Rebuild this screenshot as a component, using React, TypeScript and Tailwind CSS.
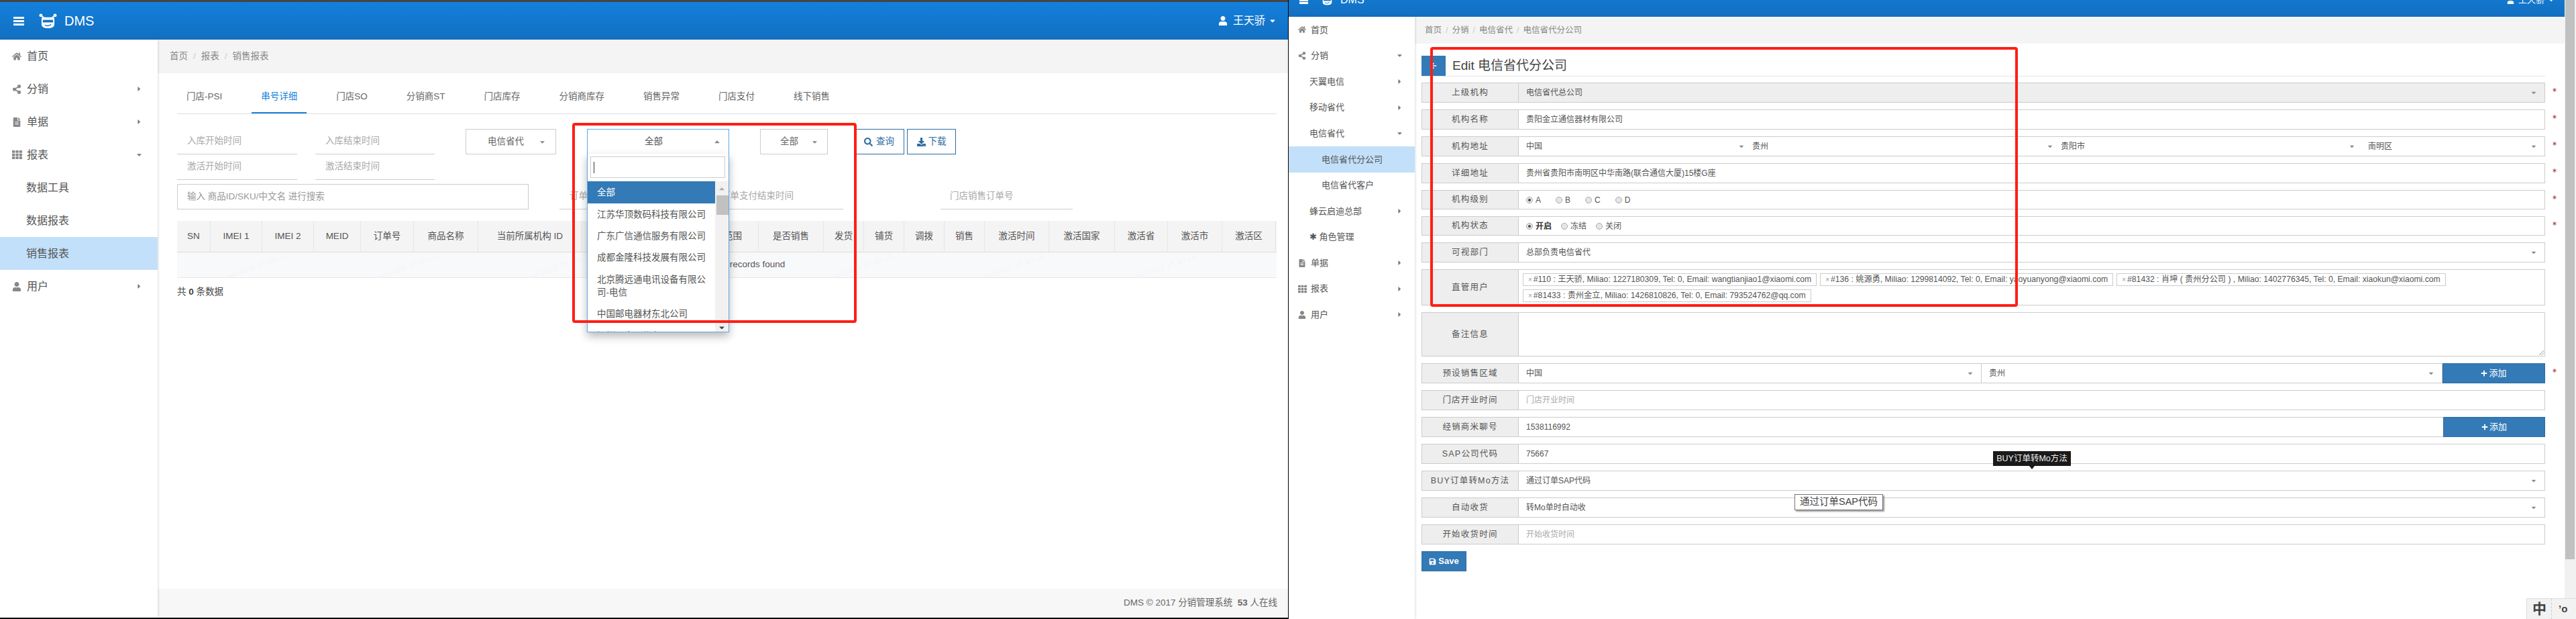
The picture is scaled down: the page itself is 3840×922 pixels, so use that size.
import type { ReactNode } from "react";
import {
  FaArrowLeft,
  FaAsterisk,
  FaCaretDown,
  FaCaretRight,
  FaCaretUp,
  FaDownload,
  FaFileAlt,
  FaHome,
  FaPlus,
  FaSave,
  FaSearch,
  FaShareAlt,
  FaTh,
  FaUser,
} from "react-icons/fa";

const tabs = ["门店-PSI", "串号详细", "门店SO", "分销商ST", "门店库存", "分销商库存", "销售异常", "门店支付", "线下销售"];

const columns = [
  "SN", "IMEI 1", "IMEI 2", "MEID", "订单号", "商品名称", "当前所属机构 ID", "当前所属机构名称", "销售范围",
  "是否销售", "发货", "铺货", "调拨", "销售", "激活时间", "激活国家", "激活省", "激活市", "激活区",
];

const options = [
  "江苏华顶数码科技有限公司",
  "广东广信通信服务有限公司",
  "成都金隆科技发展有限公司",
  "北京腾远通电讯设备有限公司-电信",
  "中国邮电器材东北公司",
  "深圳天音通信有限公司",
];

const tags = [
  "#110 : 王天骄, Miliao: 1227180309, Tel: 0, Email: wangtianjiao1@xiaomi.com",
  "#136 : 姚源勇, Miliao: 1299814092, Tel: 0, Email: yaoyuanyong@xiaomi.com",
  "#81432 : 肖坤 ( 贵州分公司 ) , Miliao: 1402776345, Tel: 0, Email: xiaokun@xiaomi.com",
  "#81433 : 贵州金立, Miliao: 1426810826, Tel: 0, Email: 793524762@qq.com",
];

function Logo({ className }: { className: string }) {
  return (
    <svg viewBox="0 0 28 24" className={className} fill="#fff">
      <circle cx="3" cy="3" r="2.6" />
      <circle cx="25" cy="3" r="2.6" />
      <path d="M3 3 L8 7 M25 3 L20 7" stroke="#fff" strokeWidth="2" />
      <path d="M6 6 H22 Q24 6 24 9 V17 Q24 23 14 23 Q4 23 4 17 V9 Q4 6 6 6 Z" />
      <path d="M6 10 H22 V14 H6 Z" fill="#1274c8" />
      <path d="M9 18 Q14 21 19 17" stroke="#1274c8" strokeWidth="1.4" fill="none" />
    </svg>
  );
}

function Header({ compact }: { compact?: boolean }) {
  if (compact) {
    return (
      <header className="h-[50px] -mt-[25px] shrink-0 flex items-center bg-gradient-to-b from-[#1380dc] to-[#126fc0] text-white pl-[16px] pr-[15px]">
        <Burger className="w-[13px] h-[11px]" />
        <Logo className="ml-[19px] w-[19px] h-[18px]" />
        <span className="ml-[10px] text-[16px]">DMS</span>
        <FaUser size={11} className="ml-auto" />
        <span className="ml-[6px] text-[13px]">王天骄</span>
        <FaCaretDown size={10} className="ml-[5px]" />
      </header>
    );
  }
  return (
    <header className="h-[56px] shrink-0 flex items-center bg-gradient-to-b from-[#1380dc] to-[#126fc0] text-white pl-[20px] pr-[17px]">
      <Burger className="w-[16px] h-[13px]" />
      <Logo className="ml-[22px] w-[27px] h-[23px]" />
      <span className="ml-[11px] text-[20px]">DMS</span>
      <FaUser size={14} className="ml-auto" />
      <span className="ml-[8px] text-[16px]">王天骄</span>
      <FaCaretDown size={12} className="ml-[5px]" />
    </header>
  );
}

function Burger({ className }: { className: string }) {
  return (
    <div className={`flex flex-col justify-between ${className}`}>
      <span className="h-[3px] bg-white" />
      <span className="h-[3px] bg-white" />
      <span className="h-[3px] bg-white" />
    </div>
  );
}

function NavItem({
  icon,
  label,
  caret,
  active,
  compact,
  indent,
}: {
  icon?: ReactNode;
  label: string;
  caret?: "right" | "down";
  active?: boolean;
  compact?: boolean;
  indent?: "sub" | "subsub";
}) {
  const pad = compact
    ? indent === "subsub"
      ? "pl-[49px]"
      : indent === "sub"
        ? "pl-[31px]"
        : "pl-[14px]"
    : indent
      ? "pl-[39px]"
      : "pl-[18px]";
  return (
    <div
      className={[
        "flex items-center text-[#555]",
        compact ? "h-[38.6px] text-[13px] pr-[17px]" : "h-[49px] text-[16px] pr-[22px]",
        pad,
        active ? "bg-[#c2e0fa]" : "",
      ].join(" ")}
    >
      {icon && (
        <span className={`text-[#888] ${compact ? "w-[19px]" : "w-[22px]"}`}>{icon}</span>
      )}
      <span>{label}</span>
      {caret === "right" && <FaCaretRight size={11} className="ml-auto text-[#777]" />}
      {caret === "down" && <FaCaretDown size={11} className="ml-auto text-[#777]" />}
    </div>
  );
}

function UnderlineInput({ text, className }: { text: string; className: string }) {
  return (
    <div className={`h-[38px] border-b border-[#ccc] pl-[15px] flex items-center text-[13.5px] text-[#aaa] whitespace-nowrap ${className}`}>
      {text}
    </div>
  );
}

function CountrySelect() {
  return (
    <div className="relative w-[212px] h-[38px] border border-[#5fa8e6] bg-white">
      <div className="h-full pl-[85px] pr-[11px] flex items-center text-[13.5px] text-[#555]">
        全部
        <FaCaretUp size={12} className="ml-auto text-[#888]" />
      </div>
      <div className="absolute -left-px top-full w-[212px] h-[266px] z-10 bg-white border border-t-0 border-[#5fa8e6] overflow-hidden shadow-[0_6px_12px_rgba(0,0,0,.28)]">
        <div className="ml-[4px] mt-[4px] w-[201px] h-[32px] border border-[#ccc] flex items-center pl-[4px]">
          <span className="w-px h-[17px] bg-[#333]" />
        </div>
        <div className="flex mt-[5px] h-[230px]">
          <ul className="w-[190px] text-[13.5px] leading-[19px] text-[#555]">
            <li className="bg-[#337ab7] text-white px-[14px] py-[7px]">全部</li>
            {options.map((o) => (
              <li key={o} className="px-[14px] py-[6.7px]">{o}</li>
            ))}
          </ul>
          <div className="w-[20px] bg-[#f1f1f1] flex flex-col text-[#777]">
            <FaCaretUp size={12} className="mt-[5px] mx-auto text-[#aaa]" />
            <span className="mt-[4px] ml-[2px] h-[29px] bg-[#c1c1c1]" />
            <FaCaretDown size={12} className="mt-auto mb-[6px] mx-auto text-[#444]" />
          </div>
        </div>
      </div>
    </div>
  );
}

function SalesReportWindow() {
  return (
    <div className="w-[1920px] h-[922px] shrink-0 flex flex-col border-b-2 border-black">
      <div className="h-[3px] shrink-0 bg-[#444]" />
      <Header />
      <div className="flex flex-1 min-h-0">
        <aside className="w-[235px] shrink-0 bg-white relative z-10 shadow-[1px_0_3px_rgba(0,0,0,.14)]">
          <NavItem icon={<FaHome size={14} />} label="首页" />
          <NavItem icon={<FaShareAlt size={14} />} label="分销" caret="right" />
          <NavItem icon={<FaFileAlt size={14} />} label="单据" caret="right" />
          <NavItem icon={<FaTh size={15} />} label="报表" caret="down" />
          <NavItem indent="sub" label="数据工具" />
          <NavItem indent="sub" label="数据报表" />
          <NavItem indent="sub" label="销售报表" active />
          <NavItem icon={<FaUser size={14} />} label="用户" caret="right" />
        </aside>
        <main className="flex-1 flex flex-col min-w-0">
          <div className="h-[50px] shrink-0 bg-[#f4f4f4] pl-[18px] flex items-center gap-[8px] text-[13.5px] text-[#888]">
            <span>首页</span>
            <span className="text-[#ccc]">/</span>
            <span>报表</span>
            <span className="text-[#ccc]">/</span>
            <span>销售报表</span>
          </div>
          <div className="flex-1 pl-[29px] pr-[17px]">
            <nav className="mt-[13px] flex border-b border-[#ddd] h-[48px]">
              {tabs.map((t) => (
                <div
                  key={t}
                  className={[
                    "h-[47px] px-[14px] mr-[30px] flex items-center text-[13.5px] whitespace-nowrap border-b-2",
                    t === "串号详细" ? "text-[#1a82dc] border-[#1a82dc]" : "text-[#666] border-transparent",
                  ].join(" ")}
                >
                  {t}
                </div>
              ))}
            </nav>

            <div className="mt-[22px] flex items-start">
              <UnderlineInput text="入库开始时间" className="w-[179px]" />
              <UnderlineInput text="入库结束时间" className="ml-[27px] w-[178px]" />
              <div className="ml-[46px] w-[135px] h-[38px] border border-[#ccc] flex items-center pl-[32px] pr-[14px] text-[13.5px] text-[#666]">
                电信省代
                <FaCaretDown size={11} className="ml-auto text-[#888]" />
              </div>
              <div className="ml-[46px]">
                <CountrySelect />
              </div>
              <div className="ml-[46px] w-[101px] h-[38px] border border-[#ccc] flex items-center pl-[29px] pr-[13px] text-[13.5px] text-[#666]">
                全部
                <FaCaretDown size={11} className="ml-auto text-[#888]" />
              </div>
              <button className="ml-[40px] w-[74px] h-[38px] border border-[#2e6da4] text-[#2e6da4] flex items-center justify-end pr-[14px] gap-[5px] text-[13.5px]">
                <FaSearch size={13} />
                查询
              </button>
              <button className="ml-[4px] w-[73px] h-[38px] border border-[#2e6da4] text-[#2e6da4] flex items-center justify-center gap-[4px] text-[13.5px]">
                <FaDownload size={13} />
                下载
              </button>
            </div>
            <div className="flex">
              <UnderlineInput text="激活开始时间" className="w-[179px]" />
              <UnderlineInput text="激活结束时间" className="ml-[27px] w-[178px]" />
            </div>
            <div className="mt-[6px] flex">
              <div className="w-[524px] h-[38px] border border-[#ccc] pl-[14px] flex items-center text-[13.5px] text-[#999]">
                输入 商品ID/SKU/中文名 进行搜索
              </div>
              <UnderlineInput text="订单支付开始时间" className="ml-[46px] w-[197px]" />
              <UnderlineInput text="订单支付结束时间" className="ml-[29px] w-[197px]" />
              <UnderlineInput text="门店销售订单号" className="ml-[145px] w-[197px] !pl-[14px]" />
            </div>

            <div className="mt-[17px] border-b border-[#e8e8e8]">
              <div className="grid grid-cols-[50px_77px_77px_70px_79px_96px_155px_160px_103px_97px_60px_60px_60px_60px_96px_98px_79px_81px_80px] h-[47px] bg-[#f4f4f4] border-b border-[#ddd] text-[13.5px] text-[#555]">
                {columns.map((c) => (
                  <div key={c} className="flex items-center justify-center border-r border-[#e6e6e6] whitespace-nowrap">
                    {c}
                  </div>
                ))}
              </div>
              <div className="relative h-[37px] bg-[#f8f9fb] flex items-center justify-center pl-[70px] text-[13.5px] text-[#555] overflow-hidden">
                No records found
                <div className="absolute inset-0 flex pl-[70px] gap-[126px] items-center">
                  {Array.from({ length: 8 }).map((_, i) => (
                    <span key={i} className="shrink-0 w-[100px] -rotate-[20deg] text-[12px] text-black/[.04] whitespace-nowrap">
                      tianjiao1 15:19:26
                    </span>
                  ))}
                </div>
              </div>
            </div>
            <p className="mt-[12px] text-[13.5px] leading-[18px] text-[#444]">
              共 <b>0</b> 条数据
            </p>
          </div>
          <footer className="h-[43px] shrink-0 bg-[#f7f7f7] flex items-center justify-end pr-[16px] text-[13.5px] text-[#666]">
            DMS © 2017 分销管理系统&nbsp;&nbsp;<b>53</b>&nbsp;人在线
          </footer>
        </main>
      </div>
    </div>
  );
}

function Caret() {
  return <FaCaretDown size={10} className="text-[#888]" />;
}

function FormRow({
  label,
  required,
  children,
  className,
  disabled,
}: {
  label: string;
  required?: boolean;
  children?: ReactNode;
  className?: string;
  disabled?: boolean;
}) {
  return (
    <div className={`flex shrink-0 ${className ?? "h-[30px]"}`}>
      <label className="w-[145px] shrink-0 bg-[#eee] border border-[#ccc] flex items-center justify-center text-[12.5px] tracking-[1.2px] text-[#555] whitespace-nowrap">
        {label}
      </label>
      <div className={`flex-1 min-w-0 border border-l-0 border-[#ccc] flex items-center pl-[11px] text-[12px] text-[#555] ${disabled ? "bg-[#eee]" : "bg-white"}`}>
        {children}
      </div>
      <div className="w-[29px] shrink-0 pl-[11px] pt-[8px] text-[#a94442]">
        {required && <FaAsterisk size={6} />}
      </div>
    </div>
  );
}

function Radio({ text, checked, bold, className }: { text: string; checked?: boolean; bold?: boolean; className?: string }) {
  return (
    <span className={`flex items-center gap-[4px] ${className ?? ""}`}>
      <span className="w-[10px] h-[10px] rounded-full border border-[#aaa] bg-[#e6e6e6] flex items-center justify-center">
        {checked && <span className="w-[4px] h-[4px] rounded-full bg-[#444]" />}
      </span>
      <span className={bold ? "font-bold text-[#333]" : ""}>{text}</span>
    </span>
  );
}

function AddButton({ className }: { className: string }) {
  return (
    <button className={`h-[30px] bg-[#337ab7] border border-[#2e6da4] text-white text-[13px] flex items-center justify-center gap-[2px] ${className}`}>
      <FaPlus size={10} />
      添加
    </button>
  );
}

function EditWindow() {
  return (
    <div className="w-[1903px] shrink-0 h-[922px] flex flex-col border-l border-black overflow-hidden">
      <Header compact />
      <div className="flex flex-1 min-h-0">
        <aside className="w-[188px] shrink-0 bg-white relative z-10 shadow-[1px_0_3px_rgba(0,0,0,.14)]">
          <NavItem compact icon={<FaHome size={12} />} label="首页" />
          <NavItem compact icon={<FaShareAlt size={12} />} label="分销" caret="down" />
          <NavItem compact indent="sub" label="天翼电信" caret="right" />
          <NavItem compact indent="sub" label="移动省代" caret="right" />
          <NavItem compact indent="sub" label="电信省代" caret="down" />
          <NavItem compact indent="subsub" label="电信省代分公司" active />
          <NavItem compact indent="subsub" label="电信省代客户" />
          <NavItem compact indent="sub" label="蜂云启迪总部" caret="right" />
          <NavItem compact indent="sub" label="✱ 角色管理" />
          <NavItem compact icon={<FaFileAlt size={12} />} label="单据" caret="right" />
          <NavItem compact icon={<FaTh size={13} />} label="报表" caret="right" />
          <NavItem compact icon={<FaUser size={12} />} label="用户" caret="right" />
        </aside>
        <main className="flex-1 min-w-0 flex flex-col">
          <div className="h-[40px] shrink-0 bg-[#f4f4f4] pl-[15px] flex items-center gap-[6px] text-[12.5px] text-[#888]">
            <span>首页</span>
            <span className="text-[#ccc]">/</span>
            <span>分销</span>
            <span className="text-[#ccc]">/</span>
            <span>电信省代</span>
            <span className="text-[#ccc]">/</span>
            <span>电信省代分公司</span>
          </div>
          <div className="pl-[10px] flex-1">
            <div className="mt-[18px] mr-[29px] h-[31px] border-b border-[#e5e5e5] flex items-center">
              <span className="w-[36px] h-[30px] bg-[#337ab7] text-white flex items-center justify-center">
                <FaArrowLeft size={10} />
              </span>
              <h1 className="ml-[10px] text-[19px] text-[#444]">Edit 电信省代分公司</h1>
            </div>
            <form className="mt-[9px] flex flex-col gap-[10px]">
              <FormRow label="上级机构" required disabled>
                电信省代总公司
                <span className="ml-auto mr-[11px]"><Caret /></span>
              </FormRow>
              <FormRow label="机构名称" required>贵阳金立通信器材有限公司</FormRow>
              <FormRow label="机构地址" required>
                <span className="w-[337px] flex items-center pr-[11px]">中国<span className="ml-auto"><Caret /></span></span>
                <span className="w-[460px] flex items-center pr-[11px]">贵州<span className="ml-auto"><Caret /></span></span>
                <span className="w-[458px] flex items-center pr-[19px]">贵阳市<span className="ml-auto"><Caret /></span></span>
                <span className="flex-1 flex items-center pr-[11px]">南明区<span className="ml-auto"><Caret /></span></span>
              </FormRow>
              <FormRow label="详细地址" required>贵州省贵阳市南明区中华南路(联合通信大厦)15楼G座</FormRow>
              <FormRow label="机构级别" required className="h-[29px]">
                <Radio text="A" checked />
                <Radio text="B" className="ml-[22px]" />
                <Radio text="C" className="ml-[22px]" />
                <Radio text="D" className="ml-[22px]" />
              </FormRow>
              <FormRow label="机构状态" required className="h-[29px]">
                <Radio text="开启" checked bold />
                <Radio text="冻结" className="ml-[14px]" />
                <Radio text="关闭" className="ml-[14px]" />
              </FormRow>
              <FormRow label="可视部门">
                总部负责电信省代
                <span className="ml-auto mr-[11px]"><Caret /></span>
              </FormRow>
              <FormRow label="直管用户" className="h-[54px]">
                <div className="-ml-[5px] flex flex-wrap gap-x-[5px] gap-y-[5px]">
                  {tags.map((t) => (
                    <span key={t} className="h-[19px] border border-[#ccc] px-[7px] flex items-center text-[12.2px] text-[#555] whitespace-nowrap">
                      <span className="mr-[2px] text-[10px] text-[#999]">×</span>
                      {t}
                    </span>
                  ))}
                </div>
              </FormRow>
              <FormRow label="备注信息" className="h-[66px]">
                <svg viewBox="0 0 10 10" className="ml-auto self-end w-[9px] h-[9px] text-[#888]" stroke="currentColor">
                  <path d="M1 9 L9 1 M5 9 L9 5" />
                </svg>
              </FormRow>
              <div className="flex h-[30px] shrink-0">
                <label className="w-[145px] shrink-0 bg-[#eee] border border-[#ccc] flex items-center justify-center text-[12.5px] tracking-[1.2px] text-[#555]">
                  预设销售区域
                </label>
                <div className="w-[689px] border-y border-[#ccc] flex items-center pl-[11px] pr-[11px] text-[12px] text-[#555]">
                  中国<span className="ml-auto"><Caret /></span>
                </div>
                <div className="flex-1 border border-[#ccc] flex items-center pl-[11px] pr-[11px] text-[12px] text-[#555]">
                  贵州<span className="ml-auto"><Caret /></span>
                </div>
                <AddButton className="w-[153px]" />
                <div className="w-[29px] shrink-0 pl-[11px] pt-[8px] text-[#a94442]">
                  <FaAsterisk size={6} />
                </div>
              </div>
              <FormRow label="门店开业时间"><span className="text-[#aaa]">门店开业时间</span></FormRow>
              <div className="flex h-[30px] shrink-0 mr-[29px]">
                <label className="w-[145px] shrink-0 bg-[#eee] border border-[#ccc] flex items-center justify-center text-[12.5px] tracking-[1.2px] text-[#555]">
                  经销商米聊号
                </label>
                <div className="flex-1 border-y border-[#ccc] flex items-center pl-[11px] text-[12px] text-[#555]">1538116992</div>
                <AddButton className="w-[152px]" />
              </div>
              <FormRow label="SAP公司代码">75667</FormRow>
              <FormRow label="BUY订单转Mo方法">
                通过订单SAP代码
                <span className="ml-auto mr-[11px]"><Caret /></span>
              </FormRow>
              <FormRow label="自动收货">
                转Mo单时自动收
                <span className="ml-auto mr-[11px]"><Caret /></span>
              </FormRow>
              <FormRow label="开始收货时间"><span className="text-[#aaa]">开始收货时间</span></FormRow>
            </form>
            <button className="mt-[10px] w-[67px] h-[30px] bg-[#337ab7] border border-[#2e6da4] text-white text-[13px] font-bold flex items-center justify-center gap-[3px]">
              <FaSave size={11} />
              Save
            </button>
          </div>
        </main>
      </div>
    </div>
  );
}

export default function App() {
  return (
    <div className="relative w-[3840px] h-[922px] overflow-hidden bg-white flex font-['Liberation_Sans','Noto_Sans_CJK_SC',sans-serif]">
      <SalesReportWindow />
      <EditWindow />
      <div className="w-[17px] shrink-0 bg-[#f1f1f1]">
        <div className="ml-px w-[14px] h-[833px] bg-[#c1c1c1]" />
      </div>

      {/* annotation rectangles on top of the screenshots */}
      <div className="absolute left-[853px] top-[183px] w-[424px] h-[298px] z-20 border-[4px] border-[#ff1e14] rounded-[4px] pointer-events-none" />
      <div className="absolute left-[2132px] top-[70px] w-[876px] h-[387px] z-20 border-[4px] border-[#ff1e14] rounded-[4px] pointer-events-none" />

      {/* tooltips */}
      <div className="absolute left-[2971px] top-[672px] w-[116px] h-[22px] z-20 bg-[#1a1a1a] text-[#eee] text-[12.5px] flex items-center justify-center">
        BUY订单转Mo方法
        <span className="absolute left-1/2 -ml-[4px] top-full border-x-[4px] border-t-[5px] border-x-transparent border-t-[#1a1a1a]" />
      </div>
      <div className="absolute left-[2675px] top-[736px] w-[132px] h-[24px] z-20 bg-white border border-[#777] shadow-[2px_2px_2px_rgba(0,0,0,.4)] text-[14.5px] text-[#444] flex items-center justify-center whitespace-nowrap">
        通过订单SAP代码
      </div>

      {/* IME status bar */}
      <div className="absolute left-[3766px] top-[891px] w-[74px] h-[31px] z-20 bg-[#f2f2f2] border-l border-t border-[#ddd] flex items-center">
        <span className="ml-[8px] text-[21px] font-bold text-[#444]">中</span>
        <span className="ml-[7px] h-full border-l border-dashed border-[#ccc]" />
        <span className="ml-[10px] text-[15px] font-bold text-[#444]">’o</span>
      </div>
    </div>
  );
}
